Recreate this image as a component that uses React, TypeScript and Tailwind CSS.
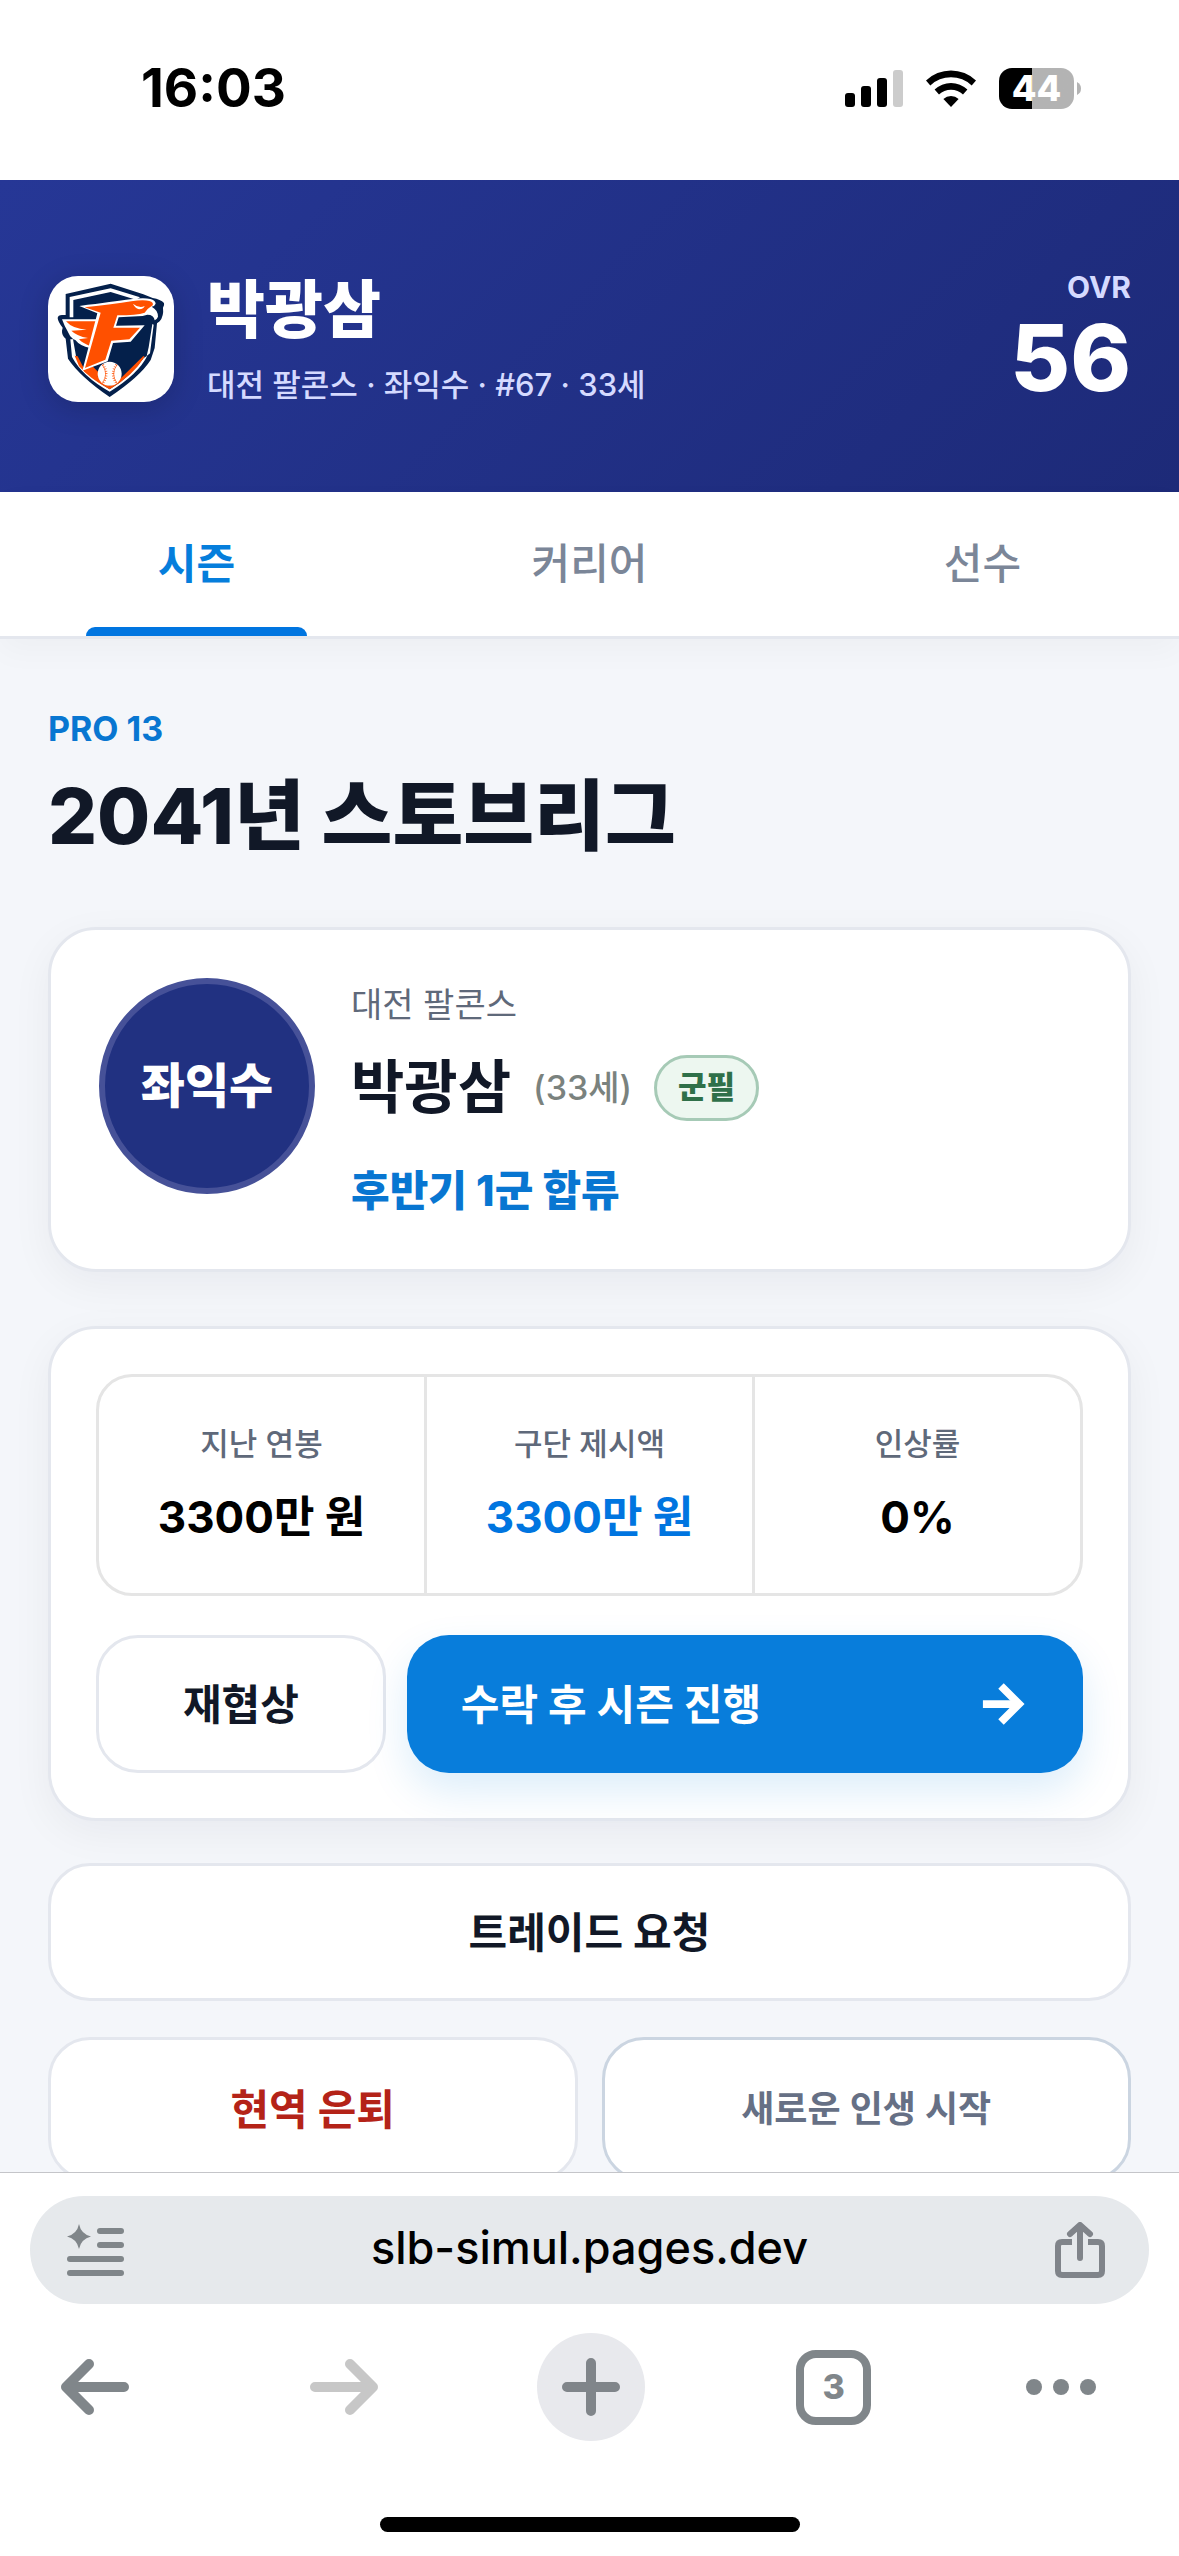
import { ArrowRight } from 'lucide-react'

interface Tab {
  id: string
  label: string
}

interface Stat {
  label: string
  value: string
  highlight?: boolean
}

const tabs: Tab[] = [
  { id: 'season', label: '시즌' },
  { id: 'career', label: '커리어' },
  { id: 'player', label: '선수' },
]

const stats: Stat[] = [
  { label: '지난 연봉', value: '3300만 원' },
  { label: '구단 제시액', value: '3300만 원', highlight: true },
  { label: '인상률', value: '0%' },
]

function StatusBar() {
  return (
    <div className="flex h-[180px] shrink-0 items-center justify-between bg-white pr-[98px] pb-1 pl-[141px]">
      <span className="text-[53px] leading-[60px] font-bold text-black">16:03</span>
      <div className="flex items-center gap-[23px]">
        <svg width="58" height="37" viewBox="0 0 58 37">
          <rect x="0" y="23" width="10" height="14" rx="3" />
          <rect x="16" y="16" width="10" height="21" rx="3" />
          <rect x="32" y="8" width="10" height="29" rx="3" />
          <rect x="48" y="0" width="10" height="37" rx="3" fill="#cccccc" />
        </svg>
        <svg width="50" height="37" viewBox="0 0 50 37">
          <path d="M0 10.5A36 36 0 0 1 50 10.5L45.7 15.5A30 30 0 0 0 4.3 15.5Z" />
          <path d="M8.6 19.6A23.5 23.5 0 0 1 41.4 19.6L37 24.6A17 17 0 0 0 13 24.6Z" />
          <path d="M17.4 29A11.2 11.2 0 0 1 32.6 29L25 37Z" />
        </svg>
        <div className="flex items-center gap-[3px]">
          <div className="flex h-[41px] w-[75px] items-center justify-center rounded-[13px] bg-linear-to-r from-black from-44% to-[#b3b3b3] to-44%">
            <span className="text-[36px] leading-none font-extrabold text-white">44</span>
          </div>
          <svg width="4" height="13" viewBox="0 0 4 13" fill="#b3b3b3">
            <path d="M0 0Q4 2 4 6.500Q4 11 0 13Z" />
          </svg>
        </div>
      </div>
    </div>
  )
}

function TeamLogo() {
  return (
    <div className="size-[126px] shrink-0 overflow-hidden rounded-[30px] bg-white shadow-[0_6px_30px_rgba(0,0,0,0.18)]">
      <svg viewBox="54 48 378 378" className="size-full">
        {/* Shield */}
        <path
          d="M242 71L340 103L368 114Q392 118 402 129Q404 136 399 143Q402 168 389 184L381 190L374 264L362 300Q330 350 239 411Q150 350 114 296L107 236Q95 226 96 212L98 203Q84 186 83 174Q84 165 96 165L107 165L107 102Z"
          fill="#04204b"
        />
        <path d="M242 85L330 112L318 119L242 96L130 120L130 172L119 172L119 111Z" fill="#fff" />
        <path d="M121 238L129 238L138 288L163 331Q195 363 239 388Q300 352 341 294L352 287Q325 342 239 395Q158 350 126 291Z" fill="#fff" />
        <path d="M367 192L371 194L360 280L350 288L356 262Z" fill="#fff" />
        {/* Lower trim */}
        <path d="M134 287L143 289L160 322L167 325L189 320L207 338L203 349L239 379L277 350L340 288L344 290Q310 345 239 388Q175 353 147 318Z" fill="#ff5000" />
        {/* Wing */}
        <path
          d="M96 178L206 178L180 264Q150 258 136 240L130 238Q118 228 112 212Q104 200 96 178Z"
          fill="#fff"
        />
        <path d="M108 184L203 184L178 257Q158 250 147 238L174 234Q140 228 124 212L170 209Q128 207 108 184Z" fill="#ff5000" />
        {/* Falcon F */}
        <path
          d="M148 138Q250 125 302 118Q340 112 361 117Q376 121 377 131Q374 139 365 140Q384 150 384 170Q381 178 374 181Q372 164 352 164L338 168L266 172L258 197L344 196L302 245L249 249L233 304L157 332L202 160Z"
          fill="#fff"
        />
        <path
          d="M164 142Q250 133 304 124Q340 118 358 123Q372 127 368 136Q352 146 344 158Q320 166 262 166L250 203L330 203L298 238L244 242L226 299L165 324L212 158Z"
          fill="#ff5000"
        />
        <path d="M309 131Q328 147 344 138Q342 147 327 148Q314 143 309 131Z" fill="#fff" />
        {/* Baseball */}
        <circle cx="239" cy="341" r="36" fill="#fff" />
        <g fill="none" stroke="#ff5000">
          <path d="M217 314Q237 342 217 370M261 314Q241 342 261 370" strokeWidth="2" />
          <path d="M219 314Q239 342 219 370M259 314Q239 342 259 370" strokeWidth="7" strokeDasharray="2 5" />
        </g>
      </svg>
    </div>
  )
}

function PlayerHeader() {
  return (
    <header className="flex h-[312px] shrink-0 items-center justify-between bg-linear-135 from-[#263796] to-[#1d2a78] px-12 pt-1.5">
      <div className="flex items-center gap-[33px]">
        <TeamLogo />
        <div className="flex flex-col gap-[15px]">
          <p className="text-[63px] leading-[75px] font-extrabold text-white">박광삼</p>
          <p className="text-[31px] leading-[45px] font-medium text-[#d5daff]">대전 팔콘스 · 좌익수 · #67 · 33세</p>
        </div>
      </div>
      <div className="flex flex-col items-end">
        <span className="text-[30px] leading-9 font-bold text-[#d5daff]">OVR</span>
        <span className="text-[92px] leading-[105px] font-extrabold text-white">56</span>
      </div>
    </header>
  )
}

function TabBar({ active }: { active: string }) {
  return (
    <nav className="z-10 grid h-[147px] shrink-0 grid-cols-3 border-b-3 border-[#e4e7ee] bg-white shadow-[0_12px_30px_rgba(17,24,39,0.03)]">
      {tabs.map(tab => {
        const isActive = tab.id === active
        return (
          <button key={tab.id} className="relative flex items-center justify-center">
            <span
              className={
                isActive
                  ? 'text-[42px] leading-[54px] font-bold text-[#057edc]'
                  : 'text-[42px] leading-[54px] font-medium text-[#7b8698]'
              }
            >
              {tab.label}
            </span>
            {isActive && <span className="absolute inset-x-[22%] bottom-0 h-[9px] rounded-t-[9px] bg-[#0075e0]" />}
          </button>
        )
      })}
    </nav>
  )
}

function ProfileCard() {
  return (
    <section className="mt-[63px] flex gap-9 rounded-[48px] border-3 border-[#e4e7ee] bg-white p-12 pb-[45px] shadow-[0_12px_42px_rgba(17,24,39,0.05)]">
      <div className="flex size-[216px] shrink-0 items-center justify-center rounded-full border-6 border-[#465198] bg-[#213181]">
        <span className="text-[48px] leading-[60px] font-extrabold text-white">좌익수</span>
      </div>
      <div className="flex flex-col">
        <p className="text-[34px] leading-[54px] text-[#5f697a]">대전 팔콘스</p>
        <div className="mt-[18px] flex items-center gap-[22px]">
          <h2 className="text-[58px] leading-[75px] font-bold text-[#111827]">박광삼</h2>
          <span className="text-[34px] leading-[45px] font-medium text-[#7a827e]">(33세)</span>
          <span className="flex h-[66px] items-center rounded-full border-3 border-[#a6cab6] bg-[#edf7f0] px-[21px] text-[31px] font-extrabold text-[#2f7049]">
            군필
          </span>
        </div>
        <p className="mt-[33px] text-[42px] leading-[66px] font-extrabold text-[#0876d1]">후반기 1군 합류</p>
      </div>
    </section>
  )
}

function ContractCard() {
  return (
    <section className="mt-[54px] rounded-[48px] border-3 border-[#e4e7ee] bg-white p-[45px] shadow-[0_12px_42px_rgba(17,24,39,0.05)]">
      <dl className="grid grid-cols-3 gap-[3px] overflow-hidden rounded-[36px] border-3 border-[#e5e5e5] bg-[#e5e5e5]">
        {stats.map(stat => (
          <div key={stat.label} className="flex h-[216px] flex-col items-center justify-center gap-[21px] bg-white pb-[3px]">
            <dt className="text-[31px] leading-[45px] font-medium text-[#5f697a]">{stat.label}</dt>
            <dd
              className={
                stat.highlight
                  ? 'text-[44px] leading-[60px] font-bold text-[#0075e0]'
                  : 'text-[44px] leading-[60px] font-bold text-black'
              }
            >
              {stat.value}
            </dd>
          </div>
        ))}
      </dl>
      <div className="mt-[39px] grid grid-cols-[3fr_7fr] gap-[21px]">
        <button className="h-[138px] rounded-[42px] border-3 border-[#e4e7ee] bg-white text-[42px] font-bold text-[#111827]">
          재협상
        </button>
        <button className="flex h-[138px] items-center justify-between rounded-[42px] bg-[#087ddb] pr-[51px] pl-[54px] text-[42px] font-bold text-white shadow-[0_18px_42px_rgba(8,125,219,0.14)]">
          수락 후 시즌 진행
          <ArrowRight size={62} strokeWidth={3} strokeLinecap="butt" strokeLinejoin="miter" />
        </button>
      </div>
    </section>
  )
}

function BrowserBar() {
  return (
    <footer className="z-10 shrink-0 border-t border-[#c4c5c9] bg-white px-[30px] pt-[23px]">
      <div className="flex h-[108px] items-center justify-between rounded-[54px] bg-[#e6e9ec] px-9">
        <button aria-label="Reader">
          <svg width="66" height="54" viewBox="0 0 66 54" fill="#80868a">
            <path d="M13 1Q15 11 25 13.500Q15 16 13 26Q11 16 1 13.500Q11 11 13 1Z" />
            <rect x="31" y="5" width="27" height="6" rx="3" />
            <rect x="31" y="19" width="27" height="6" rx="3" />
            <rect x="1" y="33" width="57" height="6" rx="3" />
            <rect x="1" y="47" width="57" height="6" rx="3" />
          </svg>
        </button>
        <a href="https://slb-simul.pages.dev" className="pb-1 text-[45px] leading-[60px] font-medium text-black">
          slb-simul.pages.dev
        </a>
        <button aria-label="Share">
          <svg width="66" height="57" viewBox="0 0 66 57" fill="none" stroke="#80848a" strokeWidth="6" strokeLinejoin="round">
            <path d="M25 20H15Q11 20 11 24V49Q11 53 15 53H51Q55 53 55 49V24Q55 20 51 20H41" />
            <path d="M33 36V4M23 12L33 3L43 12" strokeLinecap="round" />
          </svg>
        </button>
      </div>
      <div className="mt-[29px] flex h-[108px] items-center justify-between pr-[50px] pl-[19px]">
        <button aria-label="Back" className="flex w-[92px] justify-center">
          <svg width="82" height="60" viewBox="0 0 82 60" fill="none" stroke="#80868a" strokeWidth="10" strokeLinecap="round" strokeLinejoin="round">
            <path d="M70 30H12M35 7L12 30L35 53" />
          </svg>
        </button>
        <button aria-label="Forward" className="flex w-[92px] justify-end">
          <svg width="82" height="60" viewBox="0 0 82 60" fill="none" stroke="#c7c7c7" strokeWidth="10" strokeLinecap="round" strokeLinejoin="round">
            <path d="M12 30H70M47 7L70 30L47 53" />
          </svg>
        </button>
        <button aria-label="New tab" className="flex size-[108px] items-center justify-center rounded-full bg-[#e8e9ed]">
          <svg width="58" height="58" viewBox="0 0 58 58" stroke="#80858a" strokeWidth="10" strokeLinecap="round">
            <path d="M29 5V53M5 29H53" />
          </svg>
        </button>
        <button
          aria-label="Tabs"
          className="flex size-[75px] items-center justify-center rounded-[20px] border-8 border-[#80868a] text-[34px] leading-none font-extrabold text-[#80868a]"
        >
          3
        </button>
        <button aria-label="Menu" className="flex w-[76px] justify-center">
          <svg width="70" height="16" viewBox="0 0 70 16" fill="#80868a">
            <circle cx="8" cy="8" r="8" />
            <circle cx="35" cy="8" r="8" />
            <circle cx="62" cy="8" r="8" />
          </svg>
        </button>
      </div>
      <div className="mx-auto mt-[76px] mb-6 h-[15px] w-[420px] rounded-full bg-black" />
    </footer>
  )
}

export default function App() {
  return (
    <div className="flex h-screen flex-col overflow-hidden bg-[#f4f6fa] font-[Inter,'Noto_Sans_CJK_KR',sans-serif]">
      <StatusBar />
      <PlayerHeader />
      <TabBar active="season" />
      <main className="min-h-0 flex-1 overflow-hidden px-12 pt-[69px]">
        <p className="text-[34px] leading-[42px] font-bold text-[#0876d1]">PRO 13</p>
        <h1 className="mt-[18px] text-[77px] leading-[96px] font-extrabold text-[#111827]">2041년 스토브리그</h1>
        <ProfileCard />
        <ContractCard />
        <button className="mt-[42px] h-[138px] w-full rounded-[42px] border-3 border-[#e4e7ee] bg-white text-[42px] font-bold text-[#111827]">
          트레이드 요청
        </button>
        <div className="mt-9 grid grid-cols-2 gap-6">
          <button className="h-[144px] rounded-[42px] border-3 border-[#e4e7ee] bg-white text-[42px] font-bold text-[#b42318]">
            현역 은퇴
          </button>
          <button className="h-[144px] rounded-[42px] border-3 border-[#cbd5e1] bg-white text-[36px] font-semibold text-[#667085]">
            새로운 인생 시작
          </button>
        </div>
      </main>
      <BrowserBar />
    </div>
  )
}
